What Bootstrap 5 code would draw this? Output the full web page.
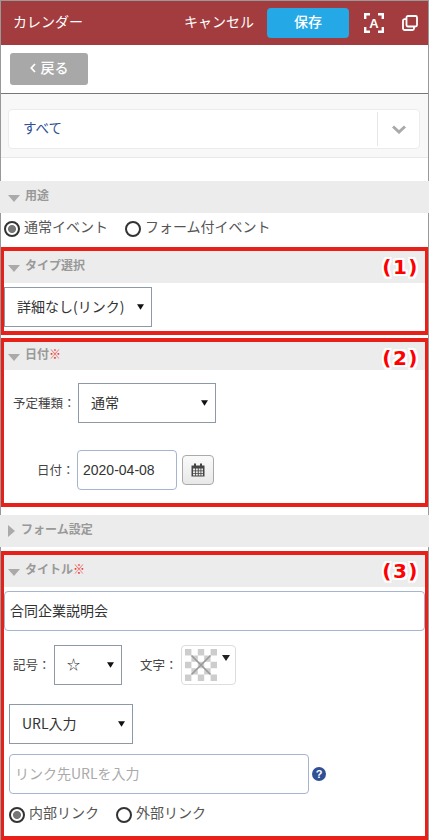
<!DOCTYPE html>
<html lang="ja">
<head>
<meta charset="utf-8">
<title>カレンダー</title>
<link rel="stylesheet" href="https://cdn.jsdelivr.net/npm/bootstrap@5.3.0/dist/css/bootstrap.min.css">
<style>
html,body{background:#fff}
body{width:429px;height:840px;overflow:hidden;font-family:"Noto Sans CJK JP","Liberation Sans",sans-serif;font-size:14px;color:#444;position:relative}
.edge-line{position:absolute;top:0;bottom:0;width:1px;background:#999}
.edge-l{left:0}.edge-r{right:0}
.topbar{height:45px;background:#a33c3e;border-top:1px solid #999;padding:0 11px 0 13px;color:#fff}
.topbar-title{font-size:14px;padding-bottom:3px}
.topbar-cancel{font-size:14px;margin-left:auto;margin-right:13px;padding-bottom:3px}
.btn-save{width:82px;height:30px;background:#25a9e6;color:#fff;font-size:14px;font-weight:500;border:0;border-radius:4px;padding:0 0 3px;margin-right:15px}
.icon-a{margin-right:18px;flex:none}
.back-row{height:49px;padding:8px 0 0 10px;border-bottom:1px solid #777}
.btn-back{width:78px;height:32px;background:#a8a8a8;color:#fff;font-size:14px;font-weight:500;border:0;border-radius:3px;padding:0 0 3px;gap:5px}
.filter-area{height:64px;background:#f8f8f8;border-bottom:1px solid #e8e8e8;padding:15px 9px 0 8px}
.filter-box{height:40px;background:#fff;border:1px solid #ececec;border-radius:4px;padding:2px 0}
.filter-text{color:#2f4f96;font-size:13.5px;padding:0 0 3px 14px}
.filter-arrow{width:42px;margin-left:auto;border-left:1px solid #e6e6e6;height:100%}
.sec-head{height:32px;background:#ececec;color:#999;font-weight:700;font-size:12px;padding-left:8px;gap:5px;position:relative}
.sec-head > .ttl{padding-bottom:4px}
.mark-box .sec-head{padding-left:4px}
.sec-head.slim{height:28px}
.tri-down{width:0;height:0;border-left:6px solid transparent;border-right:6px solid transparent;border-top:7px solid #aaa;margin-top:2px}
.tri-right{width:0;height:0;border-top:6px solid transparent;border-bottom:6px solid transparent;border-left:7px solid #aaa;margin-right:1px}
.req{color:#e33;font-weight:400}
.num-tag{position:absolute;right:6px;top:0;font-family:"DejaVu Sans",sans-serif;font-size:20px;font-weight:700;letter-spacing:1.5px;color:#f00;line-height:32px;text-shadow:-2px 0 #fff,2px 0 #fff,0 -2px #fff,0 2px #fff,-2px -2px #fff,2px 2px #fff,-2px 2px #fff,2px -2px #fff}
.gap-top{margin-top:23px}
.form-gap{margin-top:8px}
.radio-row{color:#555;font-size:14px}
.radio-row label{padding-bottom:4px}
.radio-main{height:34px;padding:0 0 3px 4px}
.radio-dot{appearance:none;-webkit-appearance:none;width:16px;height:16px;border:2px solid #333;border-radius:50%;background:#fff;margin:0 4px 0 0;flex:none}
.radio-dot:checked{background:radial-gradient(circle,#777 0 3.6px,#fff 4.4px)}
.opt-one{margin-right:17px}
.mark-box{border:solid #e8201a;border-width:4px}
.box-one{height:88px;margin:0 1px;border-left-width:3px;border-right-width:3px}
.box-two{height:169px;margin-top:3px}
.box-three{height:289px;margin-top:4px}
.sel-plain{border:1px solid #8d99a6;border-radius:0;height:40px;font-size:14px;color:#333;padding:0 20px 2px 12px;background-color:#fff;background-size:7px 6px;background-position:right 7px center;background-image:url("data:image/svg+xml,%3Csvg xmlns='http://www.w3.org/2000/svg' viewBox='0 0 10 8'%3E%3Cpath d='M0 0h10L5 8z' fill='%23111'/%3E%3C/svg%3E")}
.sel-type{width:148px;margin:4px 0 0 0}
.sel-kind{width:138px}
.sel-sym{width:68px;font-size:13px}
.sel-url{width:124px;margin:19px 0 0 5px}
.lbl{font-size:12.5px;color:#444}
.row-kind{padding-top:13px}
.row-kind .lbl{width:74px;padding-left:9px;white-space:nowrap}
.row-date{margin-top:27px}
.row-date .lbl{width:73px;padding-left:33px;white-space:nowrap}
.in-text{border:1px solid #a5b4cf;border-radius:4px;height:40px;font-size:14px;color:#333;padding:0 5px 2px}
.in-date{width:100px;font-family:"Liberation Sans",sans-serif;padding-bottom:0}
.btn-cal{width:32px;height:30px;padding:0;margin-left:5px;border:1px solid #aaa;border-radius:4px;background:linear-gradient(#fafafa,#e8e8e8)}
.in-title{width:421px;margin:4px 0 0 0}
.row-sym{margin-top:14px}
.row-sym .lbl-sym{margin-left:9px;width:41px;white-space:nowrap}
.row-sym .lbl-char{margin-left:18px;width:41px;white-space:nowrap}
.swatch{width:55px;height:40px;border:1px solid #ddd;border-radius:4px;padding:3px 0 0 3px;position:relative;background:#fff}
.swatch-arrow{position:absolute;right:5px;top:9px;width:0;height:0;border-left:4px solid transparent;border-right:4px solid transparent;border-top:6px solid #222}
.row-url{margin:10px 0 0 5px}
.in-url{width:300px}
.in-url::placeholder{color:#aaa;opacity:1}
.help-ic{margin-left:3px}
.radio-sub{margin:8px 0 0 5px;font-size:14px}
</style>
</head>
<body>
<div class="edge-line edge-l"></div><div class="edge-line edge-r"></div>

<header class="topbar d-flex align-items-center">
  <span class="topbar-title">カレンダー</span>
  <span class="topbar-cancel">キャンセル</span>
  <button type="button" class="btn btn-save">保存</button>
  <svg width="20" height="20" viewBox="0 0 20 20" class="icon-a" fill="none" stroke="#fff" stroke-width="2.4"><path d="M1.2 6V1.2H6M14 1.2h4.8V6M18.8 14v4.800H14M6 18.800H1.200V14"/><text x="10" y="15" text-anchor="middle" font-family="Liberation Sans" font-size="13" font-weight="700" fill="#fff" stroke="none">A</text></svg>
  <svg width="16" height="16" viewBox="0 0 16 16" fill="none" stroke="#fff" stroke-width="1.800"><rect x="4.500" y="1" width="10.500" height="10.500" rx="1.500"/><path d="M4 4.200H2.500A1.500 1.500 0 0 0 1 5.700v8A1.500 1.500 0 0 0 2.500 15h8a1.500 1.500 0 0 0 1.500-1.500V12"/></svg>
</header>

<div class="back-row"><button type="button" class="btn btn-back d-flex align-items-center justify-content-center"><svg width="6" height="10" viewBox="0 0 6 10" fill="none" stroke="#fff" stroke-width="1.800"><path d="M5 1L1.300 5 5 9"/></svg><span>戻る</span></button></div>

<div class="filter-area">
  <div class="filter-box d-flex align-items-center">
    <span class="filter-text">すべて</span>
    <span class="filter-arrow d-flex align-items-center justify-content-center">
      <svg width="14" height="9" viewBox="0 0 14 9" fill="none" stroke="#aaa" stroke-width="3"><path d="M1 1.500l6 5.500 6-5.500"/></svg>
    </span>
  </div>
</div>

<div class="sec-head gap-top d-flex align-items-center"><span class="tri-down"></span><span class="ttl">用途</span></div>
<div class="radio-row radio-main d-flex align-items-center">
  <input class="radio-dot" type="radio" name="use" checked id="u1"><label for="u1" class="opt-one">通常イベント</label>
  <input class="radio-dot" type="radio" name="use" id="u2"><label for="u2">フォーム付イベント</label>
</div>

<section class="mark-box box-one">
  <div class="sec-head d-flex align-items-center"><span class="tri-down"></span><span class="ttl">タイプ選択</span><span class="num-tag">(1)</span></div>
  <select class="form-select sel-plain sel-type"><option>詳細なし(リンク)</option></select>
</section>

<section class="mark-box box-two">
  <div class="sec-head slim d-flex align-items-center"><span class="tri-down"></span><span class="ttl">日付<span class="req">※</span></span><span class="num-tag">(2)</span></div>
  <div class="row-kind d-flex align-items-center">
    <span class="lbl">予定種類：</span>
    <select class="form-select sel-plain sel-kind"><option>通常</option></select>
  </div>
  <div class="row-date d-flex align-items-center">
    <span class="lbl">日付：</span>
    <input type="text" class="form-control in-text in-date" value="2020-04-08">
    <button type="button" class="btn btn-cal d-flex align-items-center justify-content-center">
      <svg width="14" height="14" viewBox="0 0 14 14"><path d="M0.500 2.500h13v11h-13z" fill="#444"/><path d="M2 5.500h2.200v2H2zM5 5.500h1.800v2H5zM7.700 5.500h1.800v2H7.700zM10.300 5.500H12v2h-1.700zM2 8.300h2.200v2H2zM5 8.300h1.800v2H5zM7.700 8.300h1.800v2H7.700zM10.300 8.300H12v2h-1.700zM2 11h2.200v1.500H2zM5 11h1.800v1.500H5zM7.700 11h1.800v1.500H7.700zM10.300 11H12v1.500h-1.700z" fill="#e8e8e8"/><path d="M3 0.500h2v3.200H3zM9 0.500h2v3.200H9z" fill="#444"/></svg>
    </button>
  </div>
</section>

<div class="sec-head form-gap d-flex align-items-center"><span class="tri-right"></span><span class="ttl">フォーム設定</span></div>

<section class="mark-box box-three">
  <div class="sec-head d-flex align-items-center"><span class="tri-down"></span><span class="ttl">タイトル<span class="req">※</span></span><span class="num-tag">(3)</span></div>
  <input type="text" class="form-control in-text in-title" value="合同企業説明会">
  <div class="row-sym d-flex align-items-center">
    <span class="lbl lbl-sym">記号：</span>
    <select class="form-select sel-plain sel-sym"><option>☆</option></select>
    <span class="lbl lbl-char">文字：</span>
    <div class="swatch">
      <svg width="32" height="32" viewBox="0 0 32 32" class="d-block">
        <rect width="32" height="32" fill="#fff"/>
        <path d="M0 0h6.400v6.400H0zM12.800 0h6.400v6.400h-6.400zM25.600 0H32v6.400h-6.400zM6.400 6.400h6.400v6.400H6.400zM19.200 6.400h6.400v6.400h-6.400zM0 12.800h6.400v6.400H0zM12.800 12.800h6.400v6.400h-6.400zM25.600 12.800H32v6.400h-6.400zM6.400 19.200h6.400v6.400H6.400zM19.200 19.200h6.400v6.400h-6.400zM0 25.600h6.400V32H0zM12.800 25.600h6.400V32h-6.400zM25.600 25.600H32V32h-6.400z" fill="#cdcdcd"/>
        <path d="M6.500 6.500l19 19M25.500 6.500l-19 19" stroke="#9a9a9a" stroke-width="1.600"/>
      </svg>
      <span class="swatch-arrow"></span>
    </div>
  </div>
  <select class="form-select sel-plain sel-url"><option>URL入力</option></select>
  <div class="row-url d-flex align-items-center">
    <input type="text" class="form-control in-text in-url" placeholder="リンク先URLを入力">
    <svg class="help-ic" width="14" height="14" viewBox="0 0 14 14"><circle cx="7" cy="7" r="7" fill="#2f4f96"/><text x="7" y="11" text-anchor="middle" font-family="Liberation Sans" font-size="11" font-weight="700" fill="#fff">?</text></svg>
  </div>
  <div class="radio-row radio-sub d-flex align-items-center">
    <input class="radio-dot" type="radio" name="lnk" checked id="l1"><label for="l1" class="opt-one">内部リンク</label>
    <input class="radio-dot" type="radio" name="lnk" id="l2"><label for="l2">外部リンク</label>
  </div>
</section>
</body>
</html>
